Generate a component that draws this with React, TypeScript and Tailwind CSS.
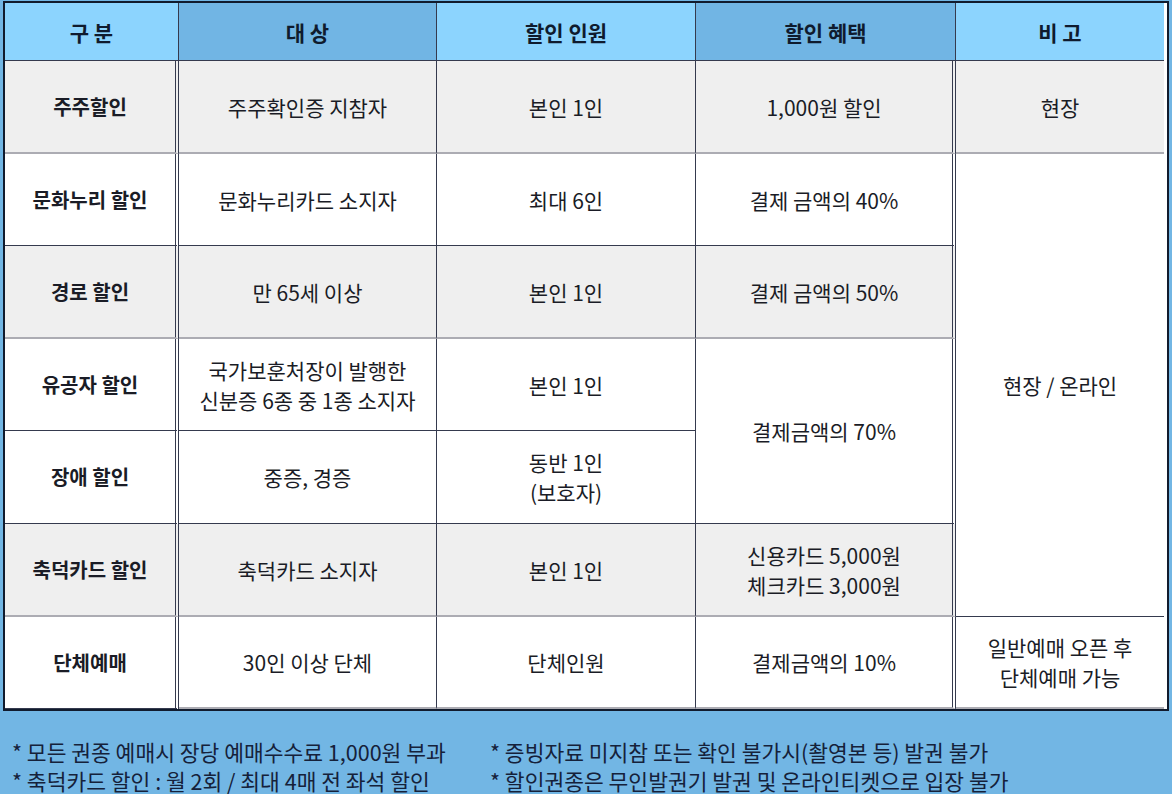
import React from "react";

const DARK = "border-[#353a4e]";

function Cell({
  children,
  className,
}: {
  children?: React.ReactNode;
  className?: string;
}) {
  return (
    <div
      className={
        "flex items-center justify-center text-center leading-[30px] " +
        (className ?? "")
      }
    >
      <div>{children}</div>
    </div>
  );
}

export default function App() {
  const gray = "bg-[#efefef] border-b-2 border-b-[#acacb3]";
  const white = "bg-white border-b border-b-[#353a4e]";
  const right = "border-r border-r-[#353a4e]";
  const rightDouble = "border-r-4 [border-right-style:double] border-r-[#353a4e]";
  const head = "font-bold text-[21px] text-[#0f1b2e] border-b";
  const first = "font-bold text-[20px]";

  return (
    <div
      className="w-[1172px] h-[794px] bg-[#72b6e4] pt-px pl-[3px] text-[#1a1c26]"
      style={{ fontFamily: '"Noto Sans CJK KR", "Noto Sans", sans-serif' }}
    >
      <div className="w-[1166px] border-2 border-[#111b2d] bg-white">
        <div className="grid grid-cols-[174px_258px_259px_260px_208px] grid-rows-[58px_93px_92px_93px_92px_93px_93px_92px] text-[21px]">
          {/* header */}
          <Cell className={`bg-[#8cd4fe] ${head} ${DARK} ${right}`}>구 분</Cell>
          <Cell className={`bg-[#71b5e4] ${head} ${DARK} ${right}`}>대 상</Cell>
          <Cell className={`bg-[#8cd4fe] ${head} ${DARK} ${right}`}>할인 인원</Cell>
          <Cell className={`bg-[#71b5e4] ${head} ${DARK} ${right}`}>할인 혜택</Cell>
          <Cell className={`bg-[#8cd4fe] ${head} ${DARK}`}>비 고</Cell>

          {/* 주주할인 */}
          <Cell className={`${gray} ${rightDouble} ${first}`}>주주할인</Cell>
          <Cell className={`${gray} ${right}`}>주주확인증 지참자</Cell>
          <Cell className={`${gray} ${right}`}>본인 1인</Cell>
          <Cell className={`${gray} ${rightDouble}`}>1,000원 할인</Cell>
          <Cell className={gray}>현장</Cell>

          {/* 문화누리 */}
          <Cell className={`${white} ${rightDouble} ${first}`}>문화누리 할인</Cell>
          <Cell className={`${white} ${right}`}>문화누리카드 소지자</Cell>
          <Cell className={`${white} ${right}`}>최대 6인</Cell>
          <Cell className={`${white} ${rightDouble}`}>결제 금액의 40%</Cell>
          <Cell className={`${white} row-span-5`}>현장 / 온라인</Cell>

          {/* 경로 */}
          <Cell className={`${gray} ${rightDouble} ${first}`}>경로 할인</Cell>
          <Cell className={`${gray} ${right}`}>만 65세 이상</Cell>
          <Cell className={`${gray} ${right}`}>본인 1인</Cell>
          <Cell className={`${gray} ${rightDouble}`}>결제 금액의 50%</Cell>

          {/* 유공자 */}
          <Cell className={`${white} ${rightDouble} ${first}`}>유공자 할인</Cell>
          <Cell className={`${white} ${right}`}>
            국가보훈처장이 발행한
            <br />
            신분증 6종 중 1종 소지자
          </Cell>
          <Cell className={`${white} ${right}`}>본인 1인</Cell>
          <Cell className={`${white} ${rightDouble} row-span-2`}>결제금액의 70%</Cell>

          {/* 장애 */}
          <Cell className={`${white} ${rightDouble} ${first}`}>장애 할인</Cell>
          <Cell className={`${white} ${right}`}>중증, 경증</Cell>
          <Cell className={`${white} ${right}`}>
            동반 1인
            <br />
            (보호자)
          </Cell>

          {/* 축덕카드 */}
          <Cell className={`${gray} ${rightDouble} ${first}`}>축덕카드 할인</Cell>
          <Cell className={`${gray} ${right}`}>축덕카드 소지자</Cell>
          <Cell className={`${gray} ${right}`}>본인 1인</Cell>
          <Cell className={`${gray} ${rightDouble}`}>
            신용카드 5,000원
            <br />
            체크카드 3,000원
          </Cell>

          {/* 단체예매 */}
          <Cell className={`${white} ${rightDouble} ${first}`}>단체예매</Cell>
          <Cell className={`bg-white border-b-2 border-b-[#acacb3] ${right}`}>30인 이상 단체</Cell>
          <Cell className={`bg-white border-b-2 border-b-[#acacb3] ${right}`}>단체인원</Cell>
          <Cell className={`bg-white border-b-2 border-b-[#acacb3] ${rightDouble}`}>결제금액의 10%</Cell>
          <Cell className="bg-white border-b-2 border-b-[#acacb3]">
            일반예매 오픈 후
            <br />
            단체예매 가능
          </Cell>
        </div>
      </div>

      <div className="grid grid-cols-[478px_1fr] pt-[26px] pl-[9px] text-[21.5px] leading-[29px] text-[#15213a]">
        <div>
          <p>* 모든 권종 예매시 장당 예매수수료 1,000원 부과</p>
          <p>* 축덕카드 할인 : 월 2회 / 최대 4매 전 좌석 할인</p>
        </div>
        <div>
          <p>* 증빙자료 미지참 또는 확인 불가시(촬영본 등) 발권 불가</p>
          <p>* 할인권종은 무인발권기 발권 및 온라인티켓으로 입장 불가</p>
        </div>
      </div>
    </div>
  );
}
